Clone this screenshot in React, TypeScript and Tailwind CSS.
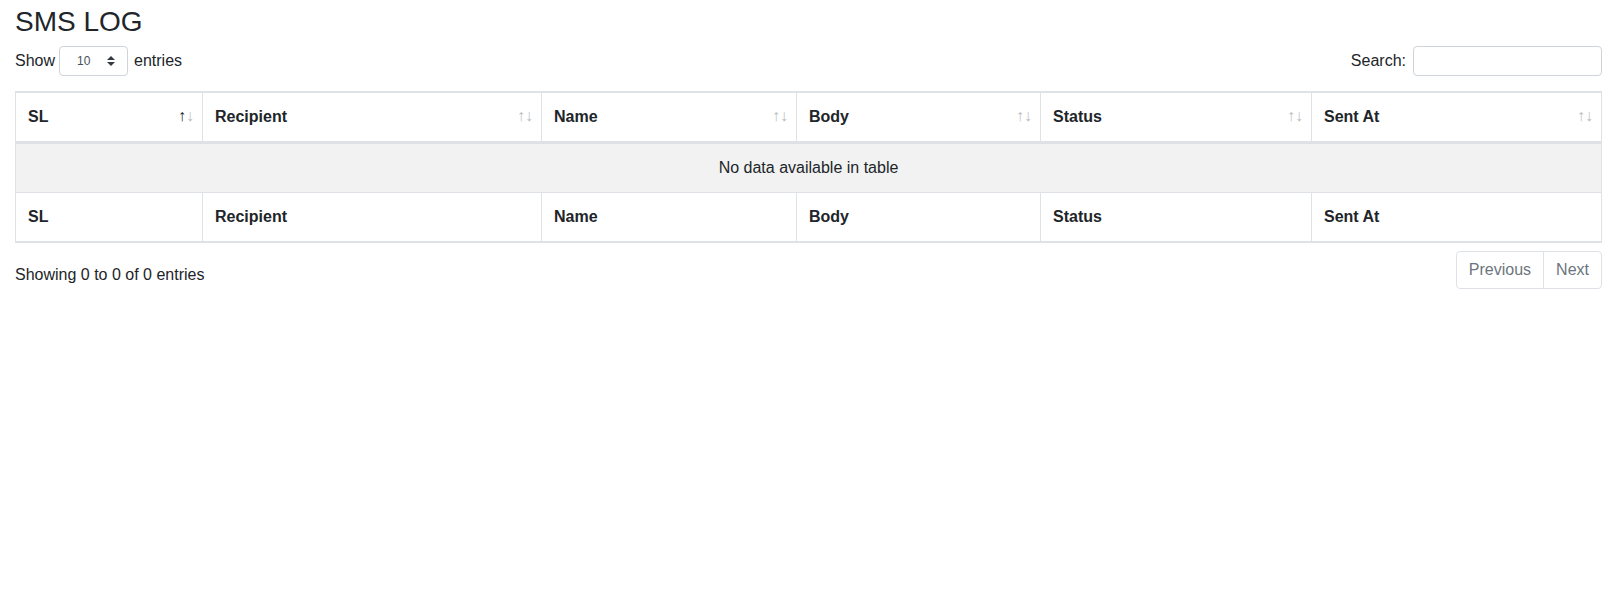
import React from 'react';

const columns = ['SL', 'Recipient', 'Name', 'Body', 'Status', 'Sent At'];

const SortArrows: React.FC<{ active?: boolean }> = ({ active }) => (
  <>
    <span className={`absolute right-[1em] bottom-[13px] leading-6 ${active ? 'opacity-100' : 'opacity-30'}`}>
      ↑
    </span>
    <span className="absolute right-[0.5em] bottom-[13px] leading-6 opacity-30">↓</span>
  </>
);

const App: React.FC = () => {
  return (
    <div className="min-h-screen bg-white pl-[15px] pr-[13px] text-[16px] leading-6 text-[#212529] font-['Liberation_Sans',Arial,sans-serif]">
      <h3 className="pt-[5px] mb-[7px] text-[28px] leading-[1.2] font-normal">SMS LOG</h3>

      {/* Length + search */}
      <div className="flex items-center justify-between h-[30px]">
        <label className="flex items-center">
          Show
          <div className="relative ml-[4px] mr-[6px]">
            <select
              defaultValue="10"
              className="appearance-none h-[30px] w-[69px] pl-[17px] rounded-[4px] border border-[#ced4da] bg-white text-[12px] text-[#495057] outline-none"
            >
              <option value="10">10</option>
              <option value="25">25</option>
              <option value="50">50</option>
              <option value="100">100</option>
            </select>
            <svg
              className="pointer-events-none absolute right-[13px] top-[10px] h-[10px] w-[8px]"
              viewBox="0 0 4 5"
            >
              <path fill="#343a40" d="M2 0L0 2h4zm0 5L0 3h4z" />
            </svg>
          </div>
          entries
        </label>
        <label className="flex items-center">
          Search:
          <input
            type="search"
            className="ml-[7px] h-[30px] w-[189px] rounded-[4px] border border-[#ced4da] bg-white px-2 text-[14px] outline-none"
          />
        </label>
      </div>

      {/* Table */}
      <table className="mt-[15px] w-full table-fixed border-separate border-spacing-0 border border-[#dee2e6]">
        <colgroup>
          <col className="w-[187px]" />
          <col className="w-[339px]" />
          <col className="w-[255px]" />
          <col className="w-[244px]" />
          <col className="w-[271px]" />
          <col />
        </colgroup>
        <thead>
          <tr>
            {columns.map((c, i) => (
              <th
                key={c}
                className={`relative text-left font-bold px-3 py-3 pr-[30px] border-t border-b-2 border-[#dee2e6] ${
                  i < columns.length - 1 ? 'border-r' : ''
                }`}
              >
                {c}
                <SortArrows active={i === 0} />
              </th>
            ))}
          </tr>
        </thead>
        <tbody>
          <tr>
            <td colSpan={6} className="bg-[#f2f2f2] border-t border-[#dee2e6] px-3 py-3 text-center">
              No data available in table
            </td>
          </tr>
        </tbody>
        <tfoot>
          <tr>
            {columns.map((c, i) => (
              <th
                key={c}
                className={`text-left font-bold px-3 py-3 border-t border-b border-[#dee2e6] ${
                  i < columns.length - 1 ? 'border-r' : ''
                }`}
              >
                {c}
              </th>
            ))}
          </tr>
        </tfoot>
      </table>

      {/* Info + pagination */}
      <div className="mt-[6px] flex items-start justify-between">
        <div className="pt-[14px]">Showing 0 to 0 of 0 entries</div>
        <ul className="my-[2px] flex">
          <li>
            <span className="block rounded-l-[4px] border border-[#dee2e6] bg-white px-3 py-2 leading-5 text-[#6c757d]">
              Previous
            </span>
          </li>
          <li className="-ml-px">
            <span className="block rounded-r-[4px] border border-[#dee2e6] bg-white px-3 py-2 leading-5 text-[#6c757d]">
              Next
            </span>
          </li>
        </ul>
      </div>
    </div>
  );
};

export default App;
